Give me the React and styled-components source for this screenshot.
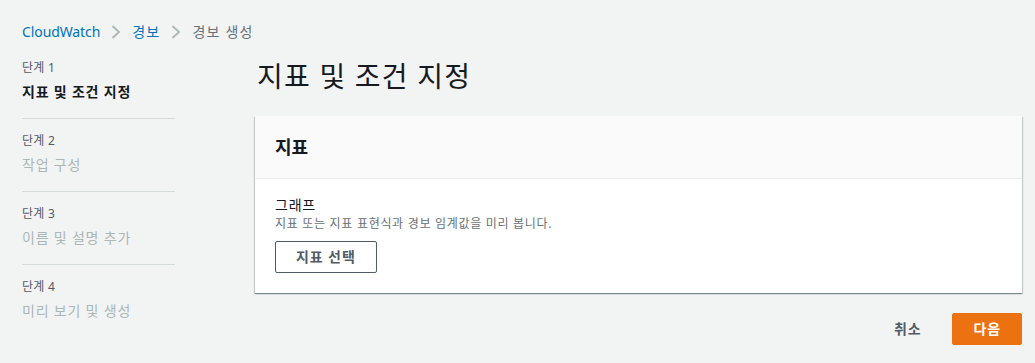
import React from 'react';
import styled, { createGlobalStyle } from 'styled-components';

const GlobalStyle = createGlobalStyle`
  body {
    margin: 0;
    background: #f2f3f3;
    font-family: "Noto Sans", "Noto Sans CJK KR", sans-serif;
    color: #16191f;
  }
`;

const Page = styled.div`
  padding: 22px 13px 0 22px;
`;

const Crumbs = styled.nav`
  display: flex;
  align-items: center;
  gap: 11px;
  font-size: 14px;
  line-height: 20px;
  height: 20px;
`;

const Crumb = styled.span`
  color: ${(p) => (p.current ? '#687078' : '#0073bb')};
  letter-spacing: ${(p) => (p.hangul ? '1.2px' : '-0.1px')};
`;

const Layout = styled.div`
  display: grid;
  grid-template-columns: 153px 1fr;
  column-gap: 80px;
  margin-top: 16px;
`;

const Steps = styled.ol`
  list-style: none;
  margin: 2px 0 0;
  padding: 0;
`;

const Step = styled.li`
  padding: 14px 0 16px;
  border-bottom: 1px solid #d5dbdb;
  &:first-child {
    padding-top: 0;
  }
  &:last-child {
    border-bottom: none;
  }
`;

const StepLabel = styled.div`
  font-size: 12px;
  line-height: 16px;
  color: #545b64;
  margin-bottom: 6px;
  letter-spacing: 0.3px;
`;

const StepTitle = styled.div`
  font-size: 14px;
  line-height: 20px;
  letter-spacing: 0.8px;
  font-weight: ${(p) => (p.active ? 700 : 400)};
  color: ${(p) => (p.active ? '#16191f' : '#aab7b8')};
`;

const Main = styled.main`
  display: flex;
  flex-direction: column;
`;

const Title = styled.h1`
  margin: 0 0 22px 2px;
  font-size: 28px;
  line-height: 36px;
  font-weight: 400;
  letter-spacing: 1.2px;
  color: #16191f;
`;

const Card = styled.section`
  background: #fff;
  box-shadow: 0 1px 1px 0 rgba(0, 28, 36, 0.3), 1px 1px 1px 0 rgba(0, 28, 36, 0.15),
    -1px 1px 1px 0 rgba(0, 28, 36, 0.15);
`;

const CardHeader = styled.header`
  background: #fafafa;
  border-bottom: 1px solid #eaeded;
  padding: 20px 20px;
  font-size: 18px;
  line-height: 22px;
  font-weight: 700;
`;

const CardBody = styled.div`
  padding: 16px 20px 20px;
`;

const FieldLabel = styled.div`
  font-size: 14px;
  line-height: 20px;
  letter-spacing: 0.8px;
  color: #16191f;
`;

const FieldDesc = styled.div`
  font-size: 12px;
  line-height: 16px;
  letter-spacing: 0.7px;
  color: #687078;
  margin: 1px 0 9px;
`;

const Button = styled.button`
  font-family: inherit;
  font-size: 14px;
  font-weight: 700;
  line-height: 20px;
  letter-spacing: 0.9px;
  border-radius: 2px;
  cursor: pointer;
  height: 32px;
  padding: 4px 20px;
  border: 1px solid ${(p) => (p.primary ? '#ec7211' : p.link ? 'transparent' : '#545b64')};
  background: ${(p) => (p.primary ? '#ec7211' : p.link ? 'transparent' : '#fff')};
  color: ${(p) => (p.primary ? '#fff' : '#545b64')};
`;

const Footer = styled.div`
  display: flex;
  justify-content: flex-end;
  gap: 10px;
  margin-top: 20px;
`;

const Chevron = () => (
  <svg width="10" height="14" viewBox="0 0 10 14" fill="none">
    <path d="M1.5 1 L8 7 L1.5 13" stroke="#aab7b8" strokeWidth="1.8" />
  </svg>
);

const steps = ['지표 및 조건 지정', '작업 구성', '이름 및 설명 추가', '미리 보기 및 생성'];

export default function App() {
  return (
    <Page>
      <GlobalStyle />
      <Crumbs>
        <Crumb>CloudWatch</Crumb>
        <Chevron />
        <Crumb hangul>경보</Crumb>
        <Chevron />
        <Crumb hangul current>경보 생성</Crumb>
      </Crumbs>
      <Layout>
        <Steps>
          {steps.map((s, i) => (
            <Step key={s}>
              <StepLabel>단계 {i + 1}</StepLabel>
              <StepTitle active={i === 0}>{s}</StepTitle>
            </Step>
          ))}
        </Steps>
        <Main>
          <Title>지표 및 조건 지정</Title>
          <Card>
            <CardHeader>지표</CardHeader>
            <CardBody>
              <FieldLabel>그래프</FieldLabel>
              <FieldDesc>지표 또는 지표 표현식과 경보 임계값을 미리 봅니다.</FieldDesc>
              <Button>지표 선택</Button>
            </CardBody>
          </Card>
          <Footer>
            <Button link>취소</Button>
            <Button primary>다음</Button>
          </Footer>
        </Main>
      </Layout>
    </Page>
  );
}
